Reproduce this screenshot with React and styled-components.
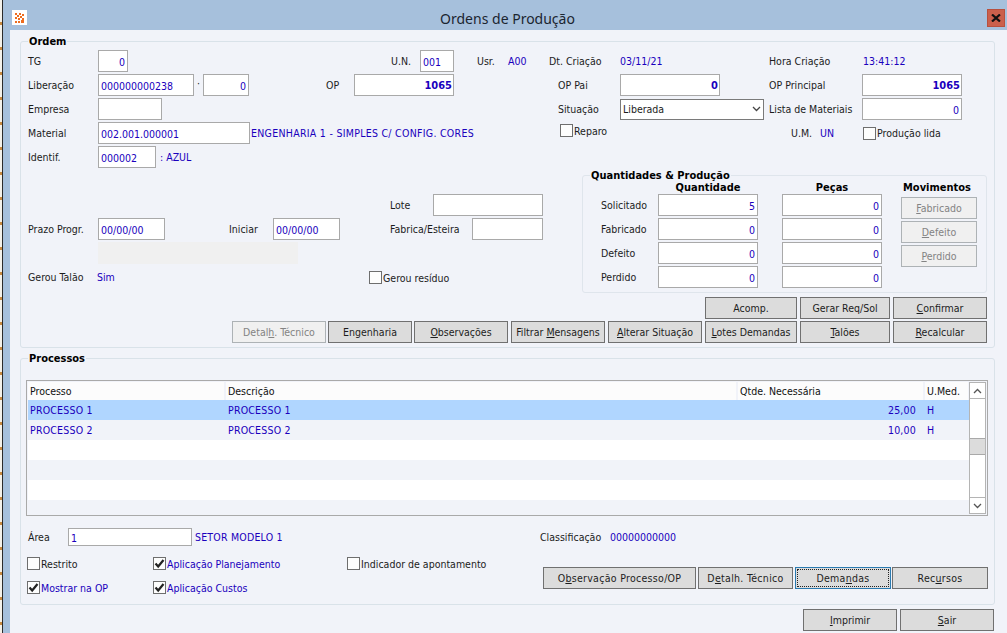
import React from "react";
import styled, { createGlobalStyle } from "styled-components";

const Global = createGlobalStyle`
  html, body { margin: 0; padding: 0; height: 100%; overflow: hidden; background: #a6c0dc; }
  * { box-sizing: border-box; }
  body { font-family: "DejaVu Sans Condensed", "Liberation Sans", sans-serif; font-size: 10.5px; color: #1c1c1c; }
  u { text-underline-offset: 1px; }
`;

const Desktop = styled.div`
  display: flex;
  width: 1007px;
  height: 633px;
`;
const Strip = styled.div`
  width: 3px;
  flex: none;
  border-right: 1px solid #2a2a2a;
  background: repeating-linear-gradient(180deg, #f4f1ea 0 22px, #c98a40 22px 32px, #f4f1ea 32px 25px);
  background-size: 2px 25px;
`;
const Frame = styled.div`
  flex: 1;
  display: flex;
  flex-direction: column;
  background: #a6c0dc;
  min-width: 0;
`;
const TitleBar = styled.div`
  height: 30px;
  flex: none;
  display: grid;
  grid-template-columns: 1fr auto 1fr;
  align-items: center;
  padding: 0 2px 0 9px;
`;
const AppIcon = styled.div`
  width: 15px;
  height: 15px;
  margin-top: 5px;
  background: #fff;
  display: flex;
  align-items: center;
  justify-content: center;
`;
const Title = styled.div`
  font-family: "Noto Sans", sans-serif;
  font-size: 14px;
  color: #1b2530;
  padding: 6px 2px 0 0;
`;
const CloseBtn = styled.div`
  justify-self: end;
  width: 18px;
  height: 18px;
  margin-top: 6px;
  background: #cb604c;
  border: 1px solid #b8503e;
  display: flex;
  align-items: center;
  justify-content: center;
`;
const Body = styled.div`
  flex: 1;
  margin-left: 7px;
  padding: 5px 12px 0 10px;
  background: #f1f3f9;
`;
const Group = styled.fieldset`
  margin: 0;
  min-width: 0;
  padding: ${(p) => p.$pad || "2px 7px 4px 7px"};
  border: 1px solid #d9e2e9;
  border-radius: 3px;
  margin-top: ${(p) => p.$mt || 0}px;
`;
const Legend = styled.legend`
  padding: 1px 1px 0;
  margin-left: ${(p) => p.$ml || 0}px;
  font-family: "DejaVu Sans Condensed", sans-serif;
  font-weight: 700;
  font-size: 11px;
  line-height: 12px;
  color: #000;
`;
const Row = styled.div`
  display: flex;
  align-items: center;
  height: ${(p) => p.$h || 22}px;
  margin-top: ${(p) => p.$mt || 0}px;
  margin-bottom: ${(p) => p.$mb ?? 2}px;
`;
const Label = styled.span`
  flex: none;
  width: ${(p) => p.$w}px;
  margin-left: ${(p) => p.$ml || 0}px;
  white-space: nowrap;
`;
const Value = styled(Label)`
  color: #1a00bd;
  letter-spacing: ${(p) => p.$ls || 0}px;
`;
const Field = styled.input`
  flex: none;
  width: ${(p) => p.$w}px;
  height: ${(p) => p.$h || 22}px;
  margin: 0 0 0 ${(p) => p.$ml || 0}px;
  padding: 1px ${(p) => (p.$bold ? 1 : 2)}px 0 2px;
  border: 1px solid #a9a9a9;
  border-radius: 0;
  background: #fff;
  outline: none;
  color: #1a00bd;
  font-family: inherit;
  font-size: ${(p) => (p.$bold ? 11 : 10.5)}px;
  font-weight: ${(p) => (p.$bold ? 700 : 400)};
  text-align: ${(p) => (p.$right ? "right" : "left")};
`;
const Dot = styled.span`
  flex: none;
  width: 9px;
  text-align: center;
  margin-top: -5px;
`;
const SelectBox = styled.div`
  flex: none;
  width: ${(p) => p.$w}px;
  height: 21px;
  padding: 0 2px;
  border: 1px solid #7a7a7a;
  background: #fff;
  display: flex;
  align-items: center;
  justify-content: space-between;
`;
const Middle = styled.div`
  display: flex;
`;
const LeftCol = styled.div`
  width: 554px;
  flex: none;
  padding-top: 25px;
`;
const GrayBlock = styled.div`
  width: 200px;
  height: 22px;
  margin-left: 70px;
  background: #f0f0f0;
`;
const QtyGroup = styled.fieldset`
  margin: 0;
  width: 406px;
  height: 124px;
  padding: 0 0 0 18px;
  border: 1px solid #dfe5ec;
  border-radius: 3px;
`;
const QtyGrid = styled.div`
  display: grid;
  grid-template-columns: 57px 100px 24px 100px 19px 76px;
  grid-auto-rows: 22px;
  row-gap: 2px;
  align-items: center;
`;
const QtyHead = styled.div`
  grid-column: ${(p) => p.$col};
  height: 12px;
  line-height: 12px;
  padding-right: ${(p) => p.$pr || 0}px;
  font-size: 11px;
  font-weight: 700;
  color: #000;
  text-align: center;
  white-space: nowrap;
`;
const HeadRow = styled.div`
  display: grid;
  grid-template-columns: 57px 100px 24px 100px 19px 76px;
  height: 12px;
`;
const MoveCol = styled.div`
  grid-column: 6;
  grid-row: 1 / span 4;
  align-self: start;
  display: flex;
  flex-direction: column;
  gap: 2px;
  padding-top: 3px;
`;
const Btn = styled.div`
  flex: none;
  width: ${(p) => p.$w}px;
  height: 22px;
  margin-left: ${(p) => p.$ml || 0}px;
  display: flex;
  align-items: center;
  justify-content: center;
  white-space: nowrap;
  background: ${(p) => (p.$off ? "#f0f0f0" : "#dcdcdc")};
  border: 1px solid ${(p) => (p.$off ? "#adb2b5" : p.$focus ? "#2a7ab0" : "#707070")};
  color: ${(p) => (p.$off ? "#838383" : "#1c1c1c")};
  ${(p) => p.$focus && "outline: 1px dotted #222; outline-offset: -3px;"}
`;
const BtnRow = styled.div`
  display: flex;
  gap: 3px;
  justify-content: flex-end;
  margin-top: ${(p) => p.$mt || 0}px;
  margin-bottom: ${(p) => p.$mb || 0}px;
  padding-right: ${(p) => p.$pr || 0}px;
`;
const Table = styled.div`
  display: flex;
  height: 136px;
  margin-top: 15px;
  border: 1px solid #a9a9a9;
  padding: 1px;
  background: #f1f3f9;
`;
const TableMain = styled.div`
  flex: 1;
  min-width: 0;
  overflow: hidden;
`;
const HeadGrid = styled.div`
  display: grid;
  grid-template-columns: 198px 512px 187px 45px;
  height: 18px;
  background: #fcfcfc;
`;
const HeadCell = styled.div`
  padding: 3px 0 0 2px;
  color: #111;
  border-right: 2px solid #f1f3f9;
`;
const DataRow = styled.div`
  display: grid;
  grid-template-columns: 198px 512px 187px 45px;
  height: 20px;
  align-items: center;
  color: #1a00bd;
  letter-spacing: 0.2px;
  background: ${(p) => (p.$sel ? "#b0d6ff" : p.$alt ? "#f1f3f9" : "#fff")};
`;
const Cell = styled.div`
  padding: 0 ${(p) => (p.$right ? 9 : 2)}px 0 2px;
  text-align: ${(p) => (p.$right ? "right" : "left")};
`;
const Scroll = styled.div`
  width: 17px;
  flex: none;
  display: flex;
  flex-direction: column;
  background: #fff;
  border: 1px solid #b4b4b4;
`;
const ScrollBtn = styled.div`
  height: 16px;
  flex: none;
  display: flex;
  align-items: center;
  justify-content: center;
  border-${(p) => p.$side}: 1px solid #b4b4b4;
`;
const ScrollTrack = styled.div`
  flex: 1;
  padding-top: 39px;
`;
const Thumb = styled.div`
  height: 17px;
  background: #dcdcdc;
  border-top: 1px solid #a9a9a9;
  border-bottom: 1px solid #a9a9a9;
`;
const Lower = styled.div`
  display: flex;
  margin-top: 11px;
  height: 38px;
`;
const CheckGrid = styled.div`
  width: 516px;
  flex: none;
  margin-left: 1px;
  display: grid;
  grid-template-columns: 126px 194px 1fr;
  grid-auto-rows: 13px;
  row-gap: 11px;
`;
const CheckWrap = styled.div`
  display: flex;
  align-items: center;
  flex: none;
  height: 13px;
  width: ${(p) => (p.$w ? p.$w + "px" : "auto")};
  margin-bottom: ${(p) => p.$raise || 0}px;
  color: ${(p) => (p.$blue ? "#1a00bd" : "#1c1c1c")};
  white-space: nowrap;
`;
const CheckBoxMark = styled.span`
  flex: none;
  width: 13px;
  height: 13px;
  margin-right: 1px;
  border: 1px solid #6e6e6e;
  background: #fdfdfd;
  display: flex;
  align-items: center;
  justify-content: center;
`;
const LowerBtns = styled.div`
  display: flex;
  gap: 2px;
  margin-top: 10px;
  letter-spacing: 0.3px;
`;

function Check({ text, on, blue, w, raise }) {
  return (
    <CheckWrap $blue={blue} $w={w} $raise={raise}>
      <CheckBoxMark>
        {on && (
          <svg width="11" height="11" viewBox="0 0 11 11">
            <path d="M1.5 5.5 L4.2 8.5 L9.5 2" fill="none" stroke="#222" strokeWidth="2.2" />
          </svg>
        )}
      </CheckBoxMark>
      {text}
    </CheckWrap>
  );
}

function Input(props) {
  return <Field readOnly {...props} />;
}

function Chevron({ up, color = "#555" }) {
  return (
    <svg width="9" height="6" viewBox="0 0 9 6">
      <path d={up ? "M1 5 L4.5 1.5 L8 5" : "M1 1 L4.5 4.5 L8 1"} fill="none" stroke={color} strokeWidth="1.3" />
    </svg>
  );
}

const qty = [
  ["Solicitado", "5"],
  ["Fabricado", "0"],
  ["Defeito", "0"],
  ["Perdido", "0"],
];

function App() {
  return (
    <Desktop>
      <Global />
      <Strip />
      <Frame>
        <TitleBar>
          <AppIcon>
            <svg width="11" height="11" viewBox="0 0 11 11">
              <path d="M1 1h2v2H1zM5 1h2v2H5zM8 2h2v2H8zM3 3h2v2H3zM6 4h2v2H6zM1 5h2v2H1zM4 6h2v2H4zM8 6h2v2H8zM1 9h2v2H1zM4 9h2v2H4zM7 8h3v3H7z" fill="#ee6c1f" />
            </svg>
          </AppIcon>
          <Title>Ordens de Produção</Title>
          <CloseBtn>
            <svg width="10" height="8" viewBox="0 0 10 8">
              <path d="M1 0.5 L9 7.5 M9 0.5 L1 7.5" stroke="#111" strokeWidth="2.2" />
            </svg>
          </CloseBtn>
        </TitleBar>
        <Body>
          <Group>
            <Legend>Ordem</Legend>
            <Row>
              <Label $w={70}>TG</Label>
              <Input $w={30} $right value="0" />
              <Label $w={29} $ml={263}>U.N.</Label>
              <Input $w={34} value="001" />
              <Label $w={31} $ml={23}>Usr.</Label>
              <Value $w={41}>A00</Value>
              <Label $w={71}>Dt. Criação</Label>
              <Value $w={149}>03/11/21</Value>
              <Label $w={94}>Hora Criação</Label>
              <Value $w={60}>13:41:12</Value>
            </Row>
            <Row>
              <Label $w={70}>Liberação</Label>
              <Input $w={96} value="000000000238" />
              <Dot>·</Dot>
              <Input $w={46} $right value="0" />
              <Label $w={28} $ml={77}>OP</Label>
              <Input $w={100} $right $bold value="1065" />
              <Label $w={62} $ml={104}>OP Pai</Label>
              <Input $w={100} $right $bold value="0" />
              <Label $w={93} $ml={49}>OP Principal</Label>
              <Input $w={100} $right $bold value="1065" />
            </Row>
            <Row>
              <Label $w={70}>Empresa</Label>
              <Input $w={64} value="" />
              <Label $w={62} $ml={396}>Situação</Label>
              <SelectBox $w={144}>
                Liberada
                <Chevron color="#444" />
              </SelectBox>
              <Label $w={93} $ml={5}>Lista de Materiais</Label>
              <Input $w={100} $right value="0" />
            </Row>
            <Row>
              <Label $w={70}>Material</Label>
              <Input $w={152} value="002.001.000001" />
              <Value $w={309} $ml={1} $ls={0.28}>ENGENHARIA 1 - SIMPLES C/ CONFIG. CORES</Value>
              <Check text="Reparo" w={231} raise={5} />
              <Label $w={29}>U.M.</Label>
              <Value $w={43}>UN</Value>
              <Check text="Produção lida" />
            </Row>
            <Row $mb={1}>
              <Label $w={70}>Identif.</Label>
              <Input $w={58} value="000002" />
              <Value $w={60} $ml={4}>: AZUL</Value>
            </Row>
            <Middle>
              <LeftCol>
                <Row>
                  <Label $w={43} $ml={362}>Lote</Label>
                  <Input $w={110} value="" />
                </Row>
                <Row>
                  <Label $w={70}>Prazo Progr.</Label>
                  <Input $w={67} value="00/00/00" />
                  <Label $w={44} $ml={64}>Iniciar</Label>
                  <Input $w={67} value="00/00/00" />
                  <Label $w={82} $ml={50}>Fabrica/Esteira</Label>
                  <Input $w={71} value="" />
                </Row>
                <Row>
                  <GrayBlock />
                </Row>
                <Row $mb={0}>
                  <Label $w={69}>Gerou Talão</Label>
                  <Value $w={272}>Sim</Value>
                  <Check text="Gerou resíduo" raise={-1} />
                </Row>
              </LeftCol>
              <QtyGroup>
                <Legend $ml={-11}>Quantidades &amp; Produção</Legend>
                <HeadRow>
                  <QtyHead $col={2}>Quantidade</QtyHead>
                  <QtyHead $col={4}>Peças</QtyHead>
                  <QtyHead $col={6} $pr={4}>Movimentos</QtyHead>
                </HeadRow>
                <QtyGrid>
                  {qty.map(([name, amount]) => (
                    <React.Fragment key={name}>
                      <span>{name}</span>
                      <Input $w={100} $right value={amount} />
                      <span />
                      <Input $w={100} $right value="0" />
                      <span />
                    </React.Fragment>
                  ))}
                  <MoveCol>
                    <Btn $w={76} $off><span><u>F</u>abricado</span></Btn>
                    <Btn $w={76} $off><span><u>D</u>efeito</span></Btn>
                    <Btn $w={76} $off><span><u>P</u>erdido</span></Btn>
                  </MoveCol>
                </QtyGrid>
              </QtyGroup>
            </Middle>
            <BtnRow $mt={4} $mb={2}>
              <Btn $w={92}>Acomp.</Btn>
              <Btn $w={90}>Gerar Req/Sol</Btn>
              <Btn $w={94}><span><u>C</u>onfirmar</span></Btn>
            </BtnRow>
            <BtnRow>
              <Btn $w={94} $off><span>Detal<u>h</u>. Técnico</span></Btn>
              <Btn $w={84} $ml={-1}><span>En<u>g</u>enharia</span></Btn>
              <Btn $w={94} $ml={-1}><span><u>O</u>bservações</span></Btn>
              <Btn $w={94}><span>Filtrar <u>M</u>ensagens</span></Btn>
              <Btn $w={94}><span><u>A</u>lterar Situação</span></Btn>
              <Btn $w={92}><span><u>L</u>otes Demandas</span></Btn>
              <Btn $w={90}><span><u>T</u>alões</span></Btn>
              <Btn $w={94}><span><u>R</u>ecalcular</span></Btn>
            </BtnRow>
          </Group>
          <Group $mt={4} $pad="0 6px 9px 5px">
            <Legend $ml={2}>Processos</Legend>
            <Table>
              <TableMain>
                <HeadGrid>
                  <HeadCell>Processo</HeadCell>
                  <HeadCell>Descrição</HeadCell>
                  <HeadCell>Qtde. Necessária</HeadCell>
                  <HeadCell>U.Med.</HeadCell>
                </HeadGrid>
                <DataRow $sel>
                  <Cell>PROCESSO 1</Cell>
                  <Cell>PROCESSO 1</Cell>
                  <Cell $right>25,00</Cell>
                  <Cell>H</Cell>
                </DataRow>
                <DataRow $alt>
                  <Cell>PROCESSO 2</Cell>
                  <Cell>PROCESSO 2</Cell>
                  <Cell $right>10,00</Cell>
                  <Cell>H</Cell>
                </DataRow>
                <DataRow />
                <DataRow $alt />
                <DataRow />
                <DataRow $alt />
              </TableMain>
              <Scroll>
                <ScrollBtn $side="bottom"><Chevron up /></ScrollBtn>
                <ScrollTrack><Thumb /></ScrollTrack>
                <ScrollBtn $side="top"><Chevron /></ScrollBtn>
              </Scroll>
            </Table>
            <Row $h={18} $mb={0} $mt={12}>
              <Label $w={40} $ml={2}>Área</Label>
              <Input $w={124} $h={18} value="1" />
              <Value $w={345} $ml={3} $ls={0.2}>SETOR MODELO 1</Value>
              <Label $w={70}>Classificação</Label>
              <Value $w={80}>00000000000</Value>
            </Row>
            <Lower>
              <CheckGrid>
                <Check text="Restrito" />
                <Check text="Aplicação Planejamento" on blue />
                <Check text="Indicador de apontamento" />
                <Check text="Mostrar na OP" on blue />
                <Check text="Aplicação Custos" on blue />
              </CheckGrid>
              <LowerBtns>
                <Btn $w={153}><span>O<u>b</u>servação Processo/OP</span></Btn>
                <Btn $w={95}><span>D<u>e</u>talh. Técnico</span></Btn>
                <Btn $w={96} $focus><span>Dema<u>n</u>das</span></Btn>
                <Btn $w={96} $ml={-1}><span>Rec<u>u</u>rsos</span></Btn>
              </LowerBtns>
            </Lower>
          </Group>
          <BtnRow $mt={4} $pr={1}>
            <Btn $w={94}><span><u>I</u>mprimir</span></Btn>
            <Btn $w={94}><span><u>S</u>air</span></Btn>
          </BtnRow>
        </Body>
      </Frame>
    </Desktop>
  );
}

export default App;
